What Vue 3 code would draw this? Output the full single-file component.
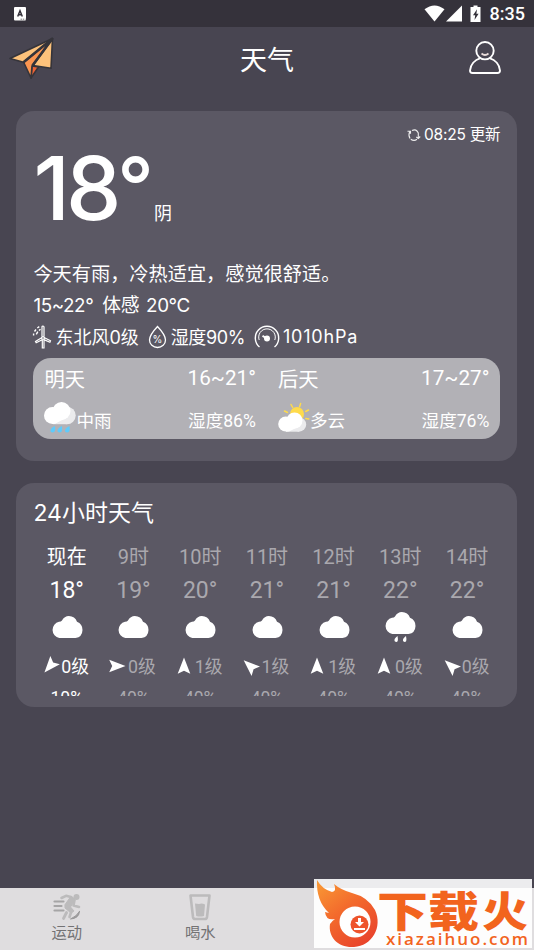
<script setup>
const days = [
  { name: '明天', range: '16~21°', text: '中雨', hum: '湿度86%', icon: 'rain' },
  { name: '后天', range: '17~27°', text: '多云', hum: '湿度76%', icon: 'sun' }
]
const hours = [
  { t: '现在', d: '18°', w: '0级', p: '10%', a: -139 },
  { t: '9时', d: '19°', w: '0级', p: '40%', a: 90 },
  { t: '10时', d: '20°', w: '1级', p: '40%', a: 0 },
  { t: '11时', d: '21°', w: '1级', p: '40%', a: -48 },
  { t: '12时', d: '21°', w: '1级', p: '40%', a: 0 },
  { t: '13时', d: '22°', w: '0级', p: '40%', a: 0, rain: true },
  { t: '14时', d: '22°', w: '0级', p: '40%', a: -48 }
]
</script>

<template>
  <div class="screen">
    <div class="status">
      <svg class="badge" width="12" height="14" viewBox="0 0 12 14"><rect width="12" height="13.5" rx="1" fill="#fff" /><path d="M3.7 9.5 6 3.8l2.3 5.7M4.5 7.8h3" fill="none" stroke="#35323b" stroke-width="1.5" /><path d="M6.5 12.2h5" stroke="#777" stroke-width="1" stroke-dasharray="1.5 .7" /></svg>
      <div class="sys">
        <svg width="58" height="18" viewBox="0 0 58 18" fill="#fff">
          <path d="M-.5 4.300Q9.500 -3.500 19.500 4.300L9.500 16.500z" /><path d="M37 .500v16H21z" />
          <path d="M48.500 .500h4v1.500h3V17H45.500V2h3z" /><path d="M52 4.300 48 10.300h2.200L49.500 15l4.100-6.300h-2.200z" fill="#35323b" />
        </svg>
        <span class="clock">8:35</span>
      </div>
    </div>

    <header class="header">
      <svg class="plane" width="48" height="44" viewBox="0 0 48 44" stroke="#35343a" stroke-width="1.600" stroke-linejoin="round">
        <path d="M23 29 22 41 29.500 30z" fill="#ee6335" />
        <path d="M43.500 1.500 14.500 25 22 41 23 29z" fill="#fb9550" />
        <path d="M43.500 1.500 1 21.500 14.500 25.300z" fill="#fdc27b" />
        <path d="M43.500 1.500 24 28.500 42 31.300z" fill="#fdc27b" />
        <path d="M43.500 1.500 14.500 25.300M43.500 1.500 23.500 28.500" fill="none" stroke-width="2.600" />
      </svg>
      <h1>天气</h1>
      <svg class="user" width="32" height="34" viewBox="0 0 32 34" fill="none" stroke="#fff" stroke-width="1.900"><circle cx="16" cy="9.700" r="8.700" /><path d="M11.500 17.200C5.500 19 1.500 24 1 29.500Q1 32 3.500 32h25Q31 32 31 29.500C30.500 24 26.500 19 20.500 17.200" /><path d="M12.500 12.500Q16 15.500 19.500 12.500" stroke-width="1.700" stroke="#e9dcda" /></svg>
    </header>

    <section class="card now">
      <div class="update">
        <svg width="14" height="12" viewBox="0 0 14 12" fill="none" stroke="#eee" stroke-width="1.100"><path d="M3 9.500Q1 6 2.800 2.500M.5 2.300h3v2.500M5 1.500Q9.500-.5 11.300 4v4.500M13.200 7.500 11.300 9.500 9.300 8M10 10.300Q7 12.500 3.800 10.200" /></svg>
        <span>08:25 更新</span>
      </div>
      <div class="big"><span class="deg">18</span><span class="ring">°</span><span class="cond">阴</span></div>
      <p class="advice">今天有雨，冷热适宜，感觉很舒适。</p>
      <p class="feel"><span>15~22°</span><span>体感</span><span>20°C</span></p>
      <div class="metrics">
        <svg width="20" height="24" viewBox="0 0 20 24" fill="none" stroke="#fff" stroke-width="1.200"><path d="M9 11.500V2Q9 1 10 1t1 1v9.500M9 12.500 2.500 16.500l.7 1.300 6-3M11 12.500l6.500 3.300-.6 1.400-6-2.600M9.300 15v8h1.700v-8" /><circle cx="10" cy="13" r="1.400" /><path d="M.6 10.500V8.500M1.500 6.500l1.500-2M4.300 3l2-1.300M3.300 9.300l1.500-2.700M6 5.500l1.500-1.300" stroke-width="1.400" /></svg>
        <span class="m1">东北风0级</span>
        <svg class="drop" width="19" height="24" viewBox="0 0 19 24"><path d="M9.500 1.500Q17.500 10 17.500 15a8 7.500 0 0 1-16 0Q1.500 10 9.500 1.500z" fill="none" stroke="#fff" stroke-width="1.300" /><text x="9.500" y="18.300" text-anchor="middle" fill="#fff" font-family="Inter, sans-serif" font-size="10">%</text></svg>
        <span class="m2">湿度90%</span>
        <svg class="gauge" width="26" height="24" viewBox="0 0 26 24" fill="none" stroke="#fff" stroke-width="1.400"><path d="M5.500 22A11.700 11.700 0 1 1 20.500 22" /><path d="M5.200 15A8.300 8.300 0 1 1 20.800 15" stroke-width="1" /><circle cx="13" cy="13.500" r="2.300" fill="#fff" /><path d="M13 13.500 8.500 10.800" stroke-width="2" /></svg>
        <span class="m3">1010hPa</span>
      </div>
      <div class="forecast">
        <div v-for="d in days" :key="d.name" class="day">
          <div class="row top"><span>{{ d.name }}</span><span class="range">{{ d.range }}</span></div>
          <div class="row bottom">
            <svg v-if="d.icon === 'rain'" width="32" height="32" viewBox="0 0 32 32">
              <g fill="#ebebed"><circle cx="23" cy="13.500" r="8.700" /><rect x="9" y="15" width="14" height="7.200" /></g>
              <g fill="#fff"><circle cx="8.500" cy="13.500" r="8.500" /><circle cx="17.500" cy="9" r="9" /><path d="M8 6h14v10L11 21.800H8z" /></g>
              <path v-for="x in [11, 18, 25.500]" :key="x" :d="`M${x} 24q-5.500 2.500-4.300 5.800 2 1.700 4-.200 1-2 .3-5.600z`" fill="#5fcbfb" />
            </svg>
            <svg v-else width="32" height="32" viewBox="0 0 32 32">
              <circle cx="19" cy="12" r="7" fill="#ffdb4b" />
              <g stroke="#ffdb4b" stroke-width="1.500" stroke-linecap="round"><path d="M13 2.500l1.700 3M22.600 1.500l-1 3.200M30.500 8l-2.800 1.500M27.800 16.500l3 .500M6.500 9l3 1.500" /></g>
              <g fill="#ebebed"><circle cx="21" cy="22.500" r="7.200" /><rect x="8" y="24" width="13" height="5.700" /></g>
              <g fill="#fff"><circle cx="7.800" cy="22" r="7.600" /><circle cx="16.500" cy="18.500" r="8" /><path d="M8 16h14v8L11 29.500H8z" /></g>
            </svg>
            <span class="kind">{{ d.text }}</span><span class="kind hum">{{ d.hum }}</span>
          </div>
        </div>
      </div>
    </section>

    <section class="card hourly">
      <h2><span>24</span>小时天气</h2>
      <div class="cols">
        <div v-for="(h, i) in hours" :key="i" class="col" :class="{ on: i === 0 }">
          <div class="hour">{{ h.t }}</div>
          <div class="temp">{{ h.d }}</div>
          <svg class="sky" width="32" height="32" viewBox="0 0 32 32" fill="#fff">
            <g :transform="h.rain ? 'translate(0 -4)' : ''"><path d="M8.300 27A7.800 8.200 0 0 1 8 10.800Q10 10.700 11 9.500C12.500 6.500 15 5 17.800 5Q24 5.200 26 10.800 31.500 13 31.500 19 31.300 26 24.500 27z" /></g>
            <path v-if="h.rain" d="M13.500 25q-4 3-2.800 5.300 2 1.700 3-.300.500-2-.200-5zM22 25q-4 3-2.800 5.300 2 1.700 3-.300.500-2-.200-5z" />
          </svg>
          <div class="wind"><svg width="18" height="18" viewBox="0 0 18 18" fill="#fff"><path :transform="`rotate(${h.a} 9 9)`" d="M9 .500 15.300 16.800 9 13.800 2.700 16.800z" /></svg><span>{{ h.w }}</span></div>
          <div class="pop">{{ h.p }}</div>
        </div>
      </div>
    </section>

    <nav class="tabs">
      <div class="tab">
        <svg width="28" height="28" viewBox="0 0 28 28" fill="none" stroke="#bcbbbc" stroke-linecap="round" stroke-linejoin="round">
          <path d="M1.500 8.500h9M1.500 13h7M1.500 17.500h9" stroke="#a6a5a6" stroke-width="2.200" /><path d="M26.500 18.500Q26 25.500 17.500 26 23.500 23.500 26.500 18.500z" stroke="#999899" fill="#999899" stroke-width="1" />
          <circle cx="23.500" cy="4" r="3" fill="#bcbbbc" stroke="none" />
          <path d="M8.500 5 13 2.800 18 4 21.500 7 20.500 12.500 26 14 M18 5 13 13 18.500 18 16.500 24" stroke-width="2.600" /><path d="M18 4 22 7 17.500 14 21 18 18 20 12 15 12 12z" fill="#bcbbbc" stroke-width="1" /><path d="M13.500 19.500 10.500 25.500" stroke-width="2.800" />
        </svg><span>运动</span>
      </div>
      <div class="tab">
        <svg width="24" height="28" viewBox="0 0 24 28"><path d="M2.500 2.500h19L19 24q-.300 2-2 2H7q-1.700 0-2-2z" fill="none" stroke="#bcbbbc" stroke-width="2.600" stroke-linejoin="round" /><path d="M7 10.500 11 11Q14 10 17 11.500L16 23Q12 24 8.200 23z" fill="#bcbbbc" /></svg><span>喝水</span>
      </div>
    </nav>

    <div class="mark">
      <svg width="218" height="69" viewBox="0 0 218 69">
        <defs><linearGradient id="fire" x1="0" y1="0" x2=".7" y2="1"><stop offset="0" stop-color="#f99b35" /><stop offset=".5" stop-color="#f36a2c" /><stop offset="1" stop-color="#e9452c" /></linearGradient></defs>
        <path d="M3 1Q8 10 18 13Q23 12 20 5Q27 11 38 14Q54 18 61 31C69 48 58 67 40 68C24 69 14 58 16 45Q18 42 21 40Q12 42 11 33L15 34Q2 22 3 1z" fill="url(#fire)" />
        <circle cx="41" cy="43" r="15.500" fill="#fff" /><circle cx="45.500" cy="45.500" r="9" fill="#ee542c" />
        <path d="M44 39h3v4h3l-4.500 4.500L41 43h3zM40 49h11v2H40z" fill="#fff" />
        <text class="brand" x="63" y="48" textLength="102" lengthAdjust="spacingAndGlyphs">下载</text>
        <text class="brand" x="168" y="48" textLength="46" lengthAdjust="spacingAndGlyphs">火</text>
        <text class="site" x="72" y="66" textLength="142">xiazaihuo.com</text>
      </svg>
    </div>
  </div>
</template>

<style>
body { margin: 0; background: #484551; }
</style>
<style scoped>
* { box-sizing: border-box; }
.screen { position: relative; width: 534px; height: 950px; overflow: hidden; display: flex; flex-direction: column; background: #484551; color: #fff; font-family: Roboto, "Noto Sans CJK SC", sans-serif; line-height: 1; }
svg { display: block; flex: none; overflow: visible; }
span { white-space: nowrap; }
h1, h2, p { margin: 0; font-weight: 400; }
.status { height: 27px; flex: none; background: #35323b; display: flex; align-items: center; justify-content: space-between; padding: 0 9px 0 14px; }
.sys { display: flex; align-items: center; gap: 7px; }
.clock { font-size: 18px; font-weight: 500; padding-top: 1px; }
.header { height: 84px; flex: none; display: flex; align-items: flex-start; justify-content: space-between; padding: 10px 33px 0 9px; }
h1 { font-size: 27px; padding: 11px 0 0 8px; }
.user { margin-top: 4px; }
.card { width: 501px; margin-left: 16.400px; padding: 0 17px; border-radius: 18px; background: #5b5864; flex: none; }
.now { height: 350px; font-family: Inter, "Noto Sans CJK SC", sans-serif; }
.update { height: 48px; display: flex; align-items: center; justify-content: flex-end; gap: 3px; font-size: 15.500px; letter-spacing: -.2px; }
.big { height: 99px; display: flex; align-items: flex-start; }
.deg { font-size: 88px; font-weight: 500; line-height: 58px; letter-spacing: -4px; }
.ring { font-size: 80px; font-weight: 500; line-height: 54px; }
.cond { font-size: 18px; padding-top: 46px; }
.advice { height: 32px; line-height: 32px; font-size: 19.200px; }
.feel { height: 31px; line-height: 31px; display: flex; gap: 9px; font-size: 18.800px; letter-spacing: -.4px; }
.feel span:last-child { margin-left: -2px; }
.metrics { height: 36.500px; display: flex; align-items: center; font-size: 18px; padding-bottom: 5px; }
.m1 { margin-left: 2px; padding-top: 2px; }
.m2 { margin-left: 4px; padding-top: 2px; letter-spacing: -.4px; }
.m3 { margin-left: 3px; letter-spacing: .8px; }
.drop { margin-left: 9px; } .gauge { margin-left: 9px; }
.forecast { height: 81px; border-radius: 18px; background: #b2b1b6; display: grid; grid-template-columns: 1fr 1fr; font-family: Roboto, "Noto Sans CJK SC", sans-serif; }
.day { padding: 0 11px; }
.row { display: flex; align-items: center; }
.top { height: 43px; font-size: 20.300px; justify-content: space-between; padding-top: 3px; }
.range { font-size: 20.700px; padding-bottom: 4px; }
.bottom { height: 34px; font-size: 17.600px; }
.kind { padding-top: 9px; }
.hum { margin-left: auto; }
.hourly { height: 224px; margin-top: 22px; }
h2 { height: 60px; line-height: 60px; font-size: 23px; }
h2 span { font-family: Inter, sans-serif; }
.cols { height: 153px; overflow: hidden; display: grid; grid-template-columns: repeat(7, 1fr); }
.col { display: flex; flex-direction: column; align-items: center; color: #aaa8ae; }
.on { color: #fff; }
.hour { height: 29px; line-height: 29px; font-size: 20px; }
.temp { height: 37px; line-height: 37px; font-size: 23px; }
.sky { margin-top: 2px; }
.wind { height: 43px; display: flex; align-items: center; gap: 2px; font-size: 17.800px; padding: 3px 3px 0 0; }
.wind span { padding-top: 2px; }
.pop { font-size: 17.500px; line-height: 20px; margin-top: 2px; }
.tabs { margin-top: auto; height: 62px; flex: none; background: #dfdddf; display: grid; grid-template-columns: repeat(4, 1fr); }
.tab { display: flex; flex-direction: column; align-items: center; padding-top: 5px; gap: 5px; font-size: 15.300px; color: #737274; }
.mark { position: absolute; left: 314px; top: 879px; width: 218px; height: 69px; background: linear-gradient(#ececee 9px, #fdfdfd 9px); }
.brand { font-family: "Noto Sans CJK SC", sans-serif; font-weight: 900; font-size: 42px; fill: #f2641e; }
.site { font-family: "Open Sans", sans-serif; font-weight: 600; font-size: 17px; fill: #f2641e; }
</style>
